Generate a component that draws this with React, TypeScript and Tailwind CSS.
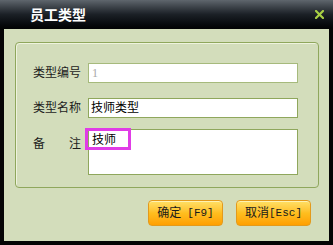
const fontCn = "font-['Liberation_Sans','Noto_Sans_CJK_SC',sans-serif]";

function OrangeButton({ cn, code, spaced }: { cn: string; code: string; spaced?: boolean }) {
  return (
    <button
      type="button"
      className="flex h-[26px] w-[75px] items-center justify-center rounded-[4px] border border-[#e39a1c] bg-gradient-to-b from-[#ffe064] via-[#ffbe1e] to-[#ff9f00] text-[12px] leading-none text-[#1a1a1a] shadow-[inset_0_1px_0_#fff2b0]"
    >
      <span>{cn}</span>
      <span className={`font-['Liberation_Mono',monospace] text-[11px] ${spaced ? 'ml-[6px]' : ''}`}>{code}</span>
    </button>
  );
}

export default function App() {
  return (
    <div className={`flex h-[245px] w-[333px] flex-col bg-[#050505] ${fontCn}`}>
      <div className="flex h-[29px] items-center justify-between bg-gradient-to-b from-[#5f666d] via-[#1b2026] to-[#020304] pl-[30px] pr-[9px]">
        <span className="text-[14px] font-bold leading-none text-white">员工类型</span>
        <svg width="9" height="9" viewBox="0 0 9 9" className="mb-[1px]">
          <path d="M1 1 L8 8 M8 1 L1 8" stroke="#a9d044" strokeWidth="2.2" strokeLinecap="square" />
        </svg>
      </div>

      <div className="mx-[4px] mb-[4px] flex flex-1 flex-col bg-[#d3ddbb] pl-[11px] pr-[10px] pt-[13px]">
        <div className="h-[146px] rounded-[4px] border border-[#8fa75c] pl-[17px] pt-[20px] shadow-[inset_1px_1px_0_#eef3de]">
          <div className="flex h-[20px] items-center">
            <span className="w-[49px] text-[12px] leading-none text-[#1c1c1c]">类型编号</span>
            <div className="ml-[6px] flex h-[20px] w-[210px] items-center border border-[#a6ba7c] bg-white pl-[3px] font-['Liberation_Serif',serif] text-[12px] text-[#a8a8a8]">
              1
            </div>
          </div>

          <div className="mt-[15px] flex h-[20px] items-center">
            <span className="w-[49px] text-[12px] leading-none text-[#1c1c1c]">类型名称</span>
            <div className="ml-[6px] flex h-[20px] w-[210px] items-center border border-[#8fa75c] bg-white pl-[2px] text-[12px] text-black">
              技师类型
            </div>
          </div>

          <div className="mt-[11px] flex items-start">
            <span className="flex w-[48px] justify-between pt-[9px] text-[12px] leading-none text-[#1c1c1c]">
              <span>备</span>
              <span>注</span>
            </span>
            <div className="relative ml-[7px] h-[46px] w-[210px] border border-[#8fa75c] bg-white pl-[3px] pt-[2px] text-[12px] leading-[16px] text-black">
              技师
              <div className="absolute left-[-4px] top-[-2px] h-[22px] w-[46px] border-[3px] border-[#e03ce6]" />
            </div>
          </div>
        </div>

        <div className="mr-[8px] mt-[12px] flex justify-end gap-[13px]">
          <OrangeButton cn="确定" code="[F9]" spaced />
          <OrangeButton cn="取消" code="[Esc]" />
        </div>
      </div>
    </div>
  );
}
